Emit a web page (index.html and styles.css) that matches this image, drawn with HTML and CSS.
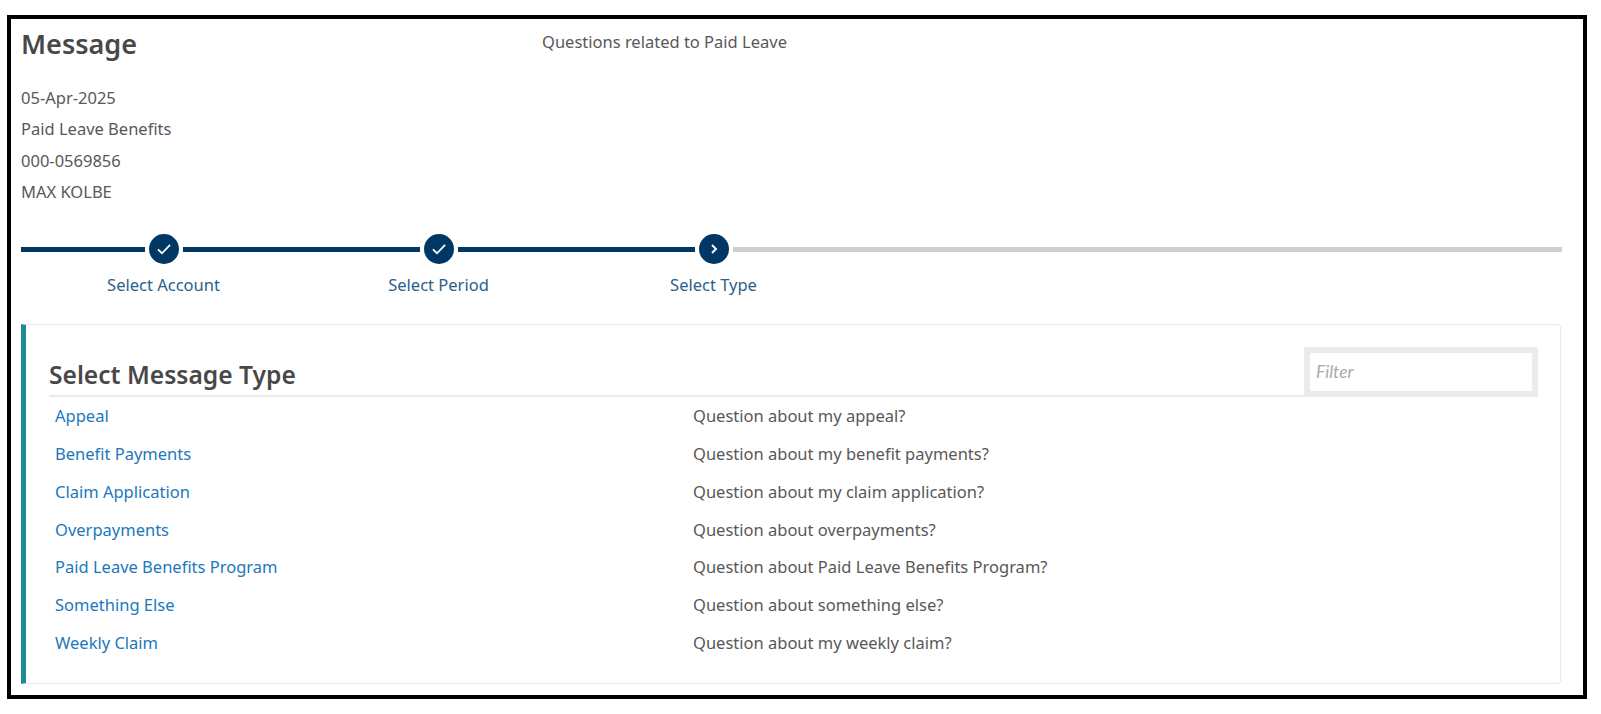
FILE: index.html
```html
<!DOCTYPE html>
<html lang="en">
<head>
<meta charset="utf-8">
<title>Message</title>
<link rel="stylesheet" href="styles.css">
</head>
<body>
<main class="frame">
  <header class="top">
    <h1 class="title">Message</h1>
    <p class="subject">Questions related to Paid Leave</p>
  </header>
  <ul class="meta">
    <li>05-Apr-2025</li>
    <li>Paid Leave Benefits</li>
    <li>000-0569856</li>
    <li>MAX KOLBE</li>
  </ul>
  <div class="track">
    <span class="line line-first"></span>
    <span class="dot"><svg viewBox="0 0 16 16" width="18" height="18"><path d="M2.6 8.4 6.2 11.8 13.4 4.4" fill="none" stroke="#fff" stroke-width="1.6"/></svg></span>
    <span class="line line-mid"></span>
    <span class="dot"><svg viewBox="0 0 16 16" width="18" height="18"><path d="M2.6 8.4 6.2 11.8 13.4 4.4" fill="none" stroke="#fff" stroke-width="1.6"/></svg></span>
    <span class="line line-mid"></span>
    <span class="dot"><svg viewBox="0 0 16 16" width="16" height="16"><path d="M6 4 10 8 6 12" fill="none" stroke="#fff" stroke-width="1.9"/></svg></span>
    <span class="line line-rest"></span>
  </div>
  <div class="labels">
    <span>Select Account</span>
    <span>Select Period</span>
    <span>Select Type</span>
  </div>
  <section class="card">
    <div class="card-head">
      <h2 class="card-title">Select Message Type</h2>
      <input class="filter" type="text" placeholder="Filter">
    </div>
    <div class="rows">
      <a href="#">Appeal</a><span>Question about my appeal?</span>
      <a href="#">Benefit Payments</a><span>Question about my benefit payments?</span>
      <a href="#">Claim Application</a><span>Question about my claim application?</span>
      <a href="#">Overpayments</a><span>Question about overpayments?</span>
      <a href="#">Paid Leave Benefits Program</a><span>Question about Paid Leave Benefits Program?</span>
      <a href="#">Something Else</a><span>Question about something else?</span>
      <a href="#">Weekly Claim</a><span>Question about my weekly claim?</span>
    </div>
  </section>
</main>
</body>
</html>
```
FILE: styles.css
```css
* { box-sizing: border-box; }
html, body { margin: 0; background: #fff; }
body {
  padding: 15px 0 0 7px;
  font-family: "Noto Sans", "Open Sans", sans-serif;
  font-size: 16.5px;
  color: #585858;
  overflow: hidden;
}
.frame {
  width: 1580px;
  height: 684px;
  border: 4px solid #000;
  padding: 0 21px 0 10px;
}
.top { display: flex; height: 50px; padding-top: 6px; }
.title {
  margin: 0;
  width: 521px;
  font-size: 27px;
  line-height: 38px;
  font-weight: 600;
  color: #484848;
}
.subject { margin: -1px 0 0; line-height: 36px; }
.meta { list-style: none; margin: 13px 0 0; padding: 0; }
.meta li { height: 31.4px; line-height: 31.4px; }
.track { display: flex; align-items: center; margin-top: 26.5px; height: 30px; }
.line { height: 5px; background: #003764; }
.line-first { width: 124px; }
.line-mid { width: 237px; }
.line-rest { flex: 1; background: #cfcfcf; }
.dot {
  width: 30px;
  height: 30px;
  margin: 0 4px;
  border-radius: 50%;
  background: #003764;
  display: flex;
  align-items: center;
  justify-content: center;
  flex: none;
}
.labels {
  display: grid;
  grid-template-columns: repeat(3, 275px);
  margin: 5.5px 0 0 5px;
  text-align: center;
  line-height: 30px;
  color: #2a5f8c;
}
.card {
  margin-top: 24px;
  height: 360px;
  width: 1540px;
  border: 1px solid #e8e8e8;
  border-left: 5px solid #1f8a9a;
  border-radius: 0 4px 4px 0;
  padding: 22px 22px 0 23px;
}
.card-head {
  display: flex;
  justify-content: space-between;
  align-items: flex-end;
  border-bottom: 2px solid #ebebeb;
  height: 50px;
}
.card-title {
  margin: 0;
  font-size: 24.6px;
  line-height: 34px;
  font-weight: 600;
  color: #484848;
  padding-bottom: 3px;
}
.filter {
  width: 234px;
  height: 50px;
  margin-bottom: -2px;
  border: 6px solid #ebebeb;
  border-radius: 2px;
  padding: 0 6px;
  font: italic 17.5px "Lato", sans-serif;
  color: #555;
  outline: none;
}
.filter::placeholder { color: #aaa; opacity: 1; }
.rows {
  display: grid;
  grid-template-columns: 638px 1fr;
  grid-auto-rows: 37.85px;
  align-items: center;
  padding: 0 0 0 6px;
}
.rows a { color: #2277bb; text-decoration: none; }
```
